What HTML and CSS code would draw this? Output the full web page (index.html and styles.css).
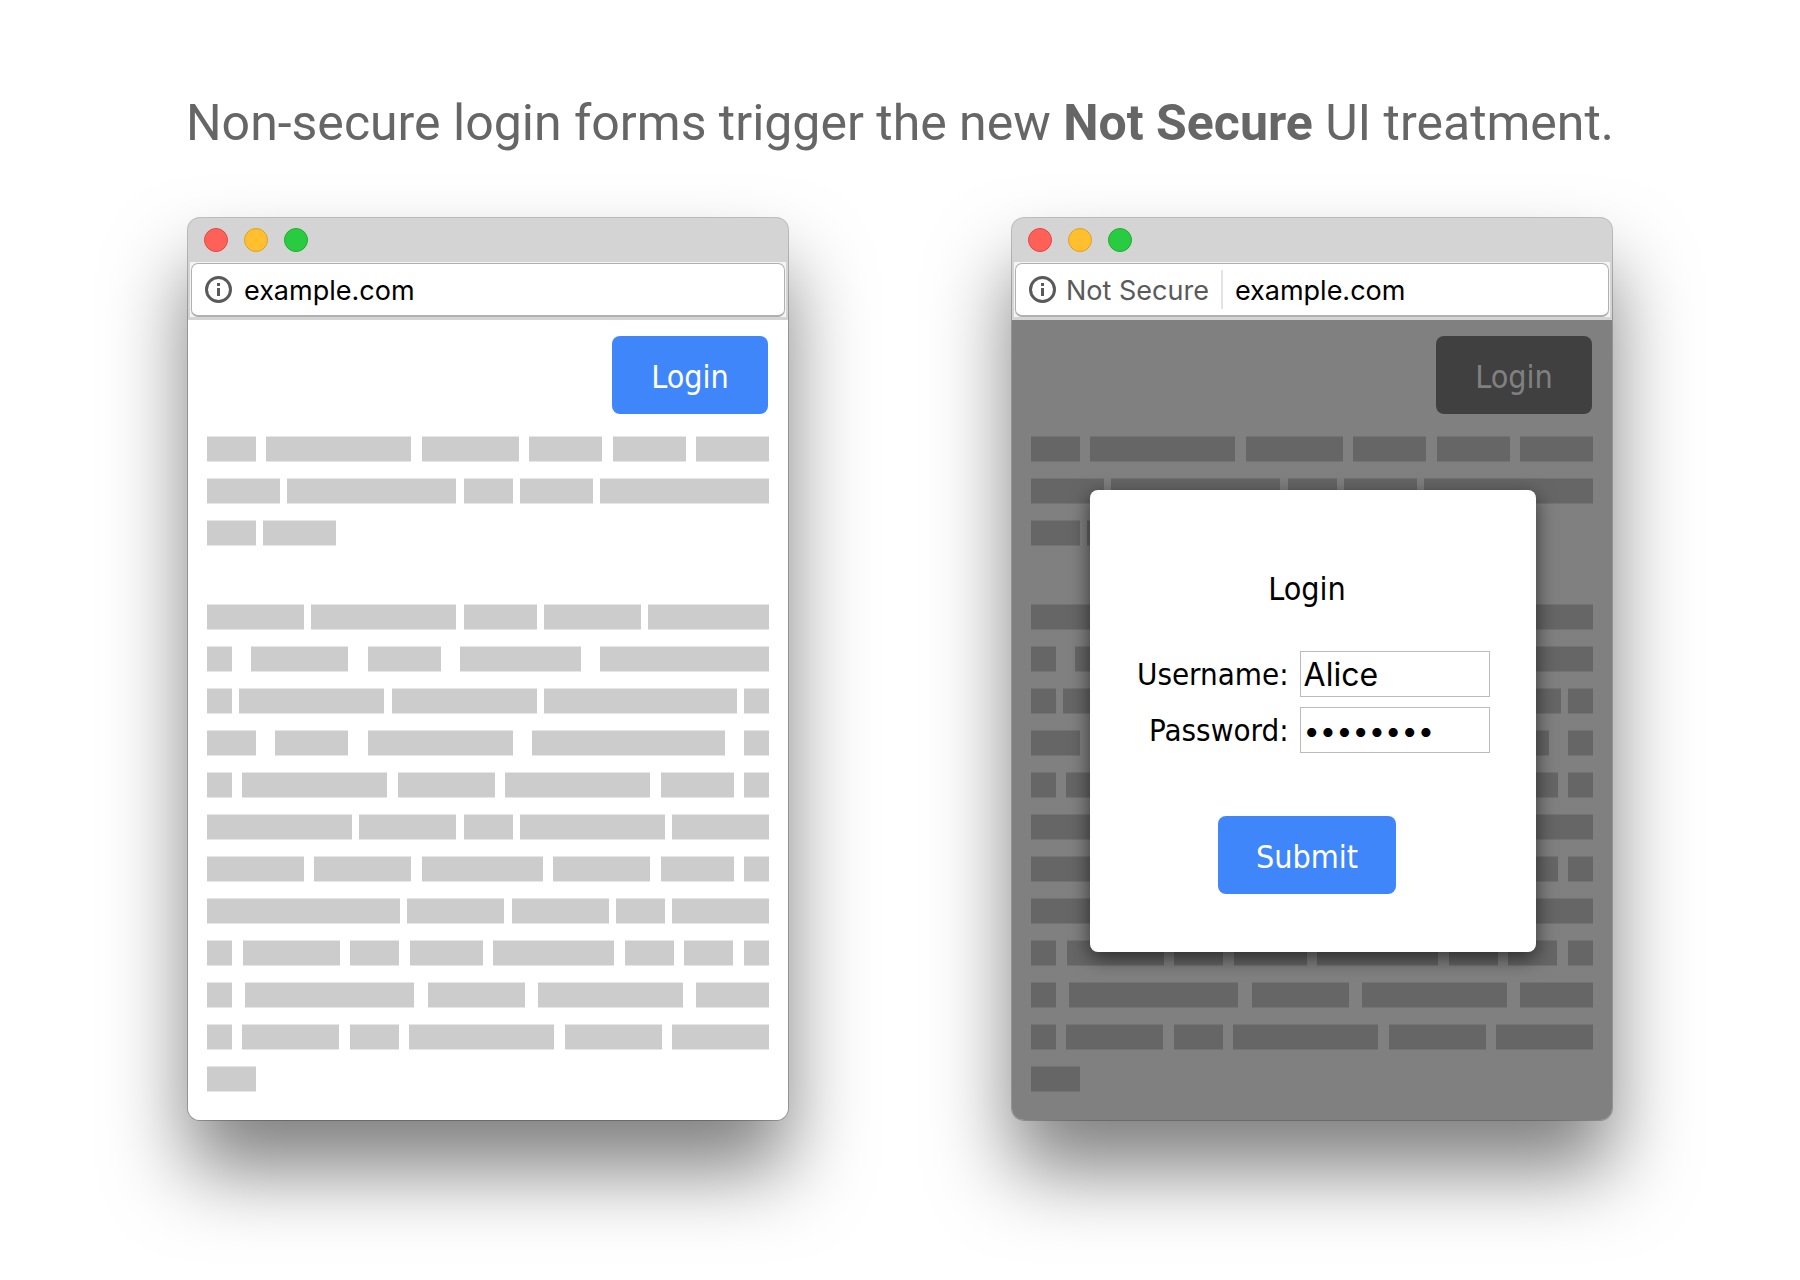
FILE: index.html
```html
<!DOCTYPE html>
<html lang="en">
<head>
<meta charset="utf-8">
<title>Not Secure login forms</title>
<link rel="stylesheet" href="styles.css">
</head>
<body>
<main class="figure">
  <h1 class="headline">Non-secure login forms trigger the new <strong>Not Secure</strong> UI treatment.</h1>
  <div class="windows">
    <section class="window" aria-label="Page before login">
      <div class="titlebar"><span class="dot red"></span><span class="dot yellow"></span><span class="dot green"></span></div>
      <div class="toolbar">
        <div class="omnibox">
          <svg class="info" viewBox="0 0 27 27" aria-hidden="true"><circle cx="13.500" cy="13.500" r="12" fill="none" stroke="currentColor" stroke-width="3"/><path d="M12 7h3v3h-3zM12 12h3v8h-3z" fill="currentColor"/></svg>
          <input class="url" type="text" value="example.com" aria-label="Address">
        </div>
      </div>
      <div class="page">
        <div class="actions"><button class="button login" type="button">Login</button></div>
        <div class="copy">
          <div class="line"><i class="w2"></i><i class="w6"></i><i class="w4"></i><i class="w3"></i><i class="w3"></i><i class="w3"></i></div>
          <div class="line"><i class="w3"></i><i class="w7"></i><i class="w2"></i><i class="w3"></i><i class="w7"></i></div>
          <div class="line last"><i class="w2"></i><i class="w3"></i></div>
          <div class="line"></div>
          <div class="line"><i class="w4"></i><i class="w6"></i><i class="w3"></i><i class="w4"></i><i class="w5"></i></div>
          <div class="line"><i class="w1"></i><i class="w4"></i><i class="w3"></i><i class="w5"></i><i class="w7"></i></div>
          <div class="line"><i class="w1"></i><i class="w6"></i><i class="w6"></i><i class="w8"></i><i class="w1"></i></div>
          <div class="line"><i class="w2"></i><i class="w3"></i><i class="w6"></i><i class="w8"></i><i class="w1"></i></div>
          <div class="line"><i class="w1"></i><i class="w6"></i><i class="w4"></i><i class="w6"></i><i class="w3"></i><i class="w1"></i></div>
          <div class="line"><i class="w6"></i><i class="w4"></i><i class="w2"></i><i class="w6"></i><i class="w4"></i></div>
          <div class="line"><i class="w4"></i><i class="w4"></i><i class="w5"></i><i class="w4"></i><i class="w3"></i><i class="w1"></i></div>
          <div class="line"><i class="w8"></i><i class="w4"></i><i class="w4"></i><i class="w2"></i><i class="w4"></i></div>
          <div class="line"><i class="w1"></i><i class="w4"></i><i class="w2"></i><i class="w3"></i><i class="w5"></i><i class="w2"></i><i class="w2"></i><i class="w1"></i></div>
          <div class="line"><i class="w1"></i><i class="w7"></i><i class="w4"></i><i class="w6"></i><i class="w3"></i></div>
          <div class="line"><i class="w1"></i><i class="w4"></i><i class="w2"></i><i class="w6"></i><i class="w4"></i><i class="w4"></i></div>
          <div class="line last"><i class="w2"></i></div>
        </div>
      </div>
    </section>

    <section class="window" aria-label="Page with login form open">
      <div class="titlebar"><span class="dot red"></span><span class="dot yellow"></span><span class="dot green"></span></div>
      <div class="toolbar">
        <div class="omnibox">
          <svg class="info" viewBox="0 0 27 27" aria-hidden="true"><circle cx="13.500" cy="13.500" r="12" fill="none" stroke="currentColor" stroke-width="3"/><path d="M12 7h3v3h-3zM12 12h3v8h-3z" fill="currentColor"/></svg>
          <span class="verdict">Not Secure</span>
          <input class="url" type="text" value="example.com" aria-label="Address">
        </div>
      </div>
      <div class="page dimmed">
        <div class="actions"><button class="button login" type="button">Login</button></div>
        <div class="copy">
          <div class="line"><i class="w2"></i><i class="w6"></i><i class="w4"></i><i class="w3"></i><i class="w3"></i><i class="w3"></i></div>
          <div class="line"><i class="w3"></i><i class="w7"></i><i class="w2"></i><i class="w3"></i><i class="w7"></i></div>
          <div class="line last"><i class="w2"></i><i class="w3"></i></div>
          <div class="line"></div>
          <div class="line"><i class="w4"></i><i class="w6"></i><i class="w3"></i><i class="w4"></i><i class="w5"></i></div>
          <div class="line"><i class="w1"></i><i class="w4"></i><i class="w3"></i><i class="w5"></i><i class="w7"></i></div>
          <div class="line"><i class="w1"></i><i class="w6"></i><i class="w6"></i><i class="w8"></i><i class="w1"></i></div>
          <div class="line"><i class="w2"></i><i class="w3"></i><i class="w6"></i><i class="w8"></i><i class="w1"></i></div>
          <div class="line"><i class="w1"></i><i class="w6"></i><i class="w4"></i><i class="w6"></i><i class="w3"></i><i class="w1"></i></div>
          <div class="line"><i class="w6"></i><i class="w4"></i><i class="w2"></i><i class="w6"></i><i class="w4"></i></div>
          <div class="line"><i class="w4"></i><i class="w4"></i><i class="w5"></i><i class="w4"></i><i class="w3"></i><i class="w1"></i></div>
          <div class="line"><i class="w8"></i><i class="w4"></i><i class="w4"></i><i class="w2"></i><i class="w4"></i></div>
          <div class="line"><i class="w1"></i><i class="w4"></i><i class="w2"></i><i class="w3"></i><i class="w5"></i><i class="w2"></i><i class="w2"></i><i class="w1"></i></div>
          <div class="line"><i class="w1"></i><i class="w7"></i><i class="w4"></i><i class="w6"></i><i class="w3"></i></div>
          <div class="line"><i class="w1"></i><i class="w4"></i><i class="w2"></i><i class="w6"></i><i class="w4"></i><i class="w4"></i></div>
          <div class="line last"><i class="w2"></i></div>
        </div>
        <form class="dialog">
          <h2 class="dialog-title">Login</h2>
          <div class="fields">
            <label for="username">Username:</label>
            <input class="field" id="username" type="text" value="Alice">
            <label for="password">Password:</label>
            <input class="field secret" id="password" type="password" value="password">
          </div>
          <button class="button submit" type="button">Submit</button>
        </form>
      </div>
    </section>
  </div>
</main>
</body>
</html>
```
FILE: styles.css
```css
* {
  box-sizing: border-box;
}

body {
  margin: 0;
  background: #fff;
  color: #000;
  font-family: "DejaVu Sans Condensed", "DejaVu Sans", sans-serif;
}

.figure {
  max-width: 1424px;
  margin: 0 auto;
  padding: 91px 0 160px;
}

.headline {
  margin: 0 -12px 63px;
  color: #666;
  font: 400 50px/64px Roboto, sans-serif;
  text-align: center;
  white-space: nowrap;
}

.headline strong {
  font-weight: 700;
}

.windows {
  display: flex;
  justify-content: space-between;
  gap: 40px;
}

.window {
  flex: 0 1 600px;
  min-width: 0;
  border-radius: 12px;
  background: #d4d4d4;
  box-shadow: 0 0 0 1px rgba(0, 0, 0, 0.24), 0 50px 80px rgba(0, 0, 0, 0.5);
}

.titlebar {
  display: flex;
  gap: 16px;
  padding: 10px 16px;
}

.dot {
  width: 24px;
  height: 24px;
  border: 1px solid;
  border-radius: 50%;
}

.red {
  background: #ff6159;
  border-color: #e2463f;
}

.yellow {
  background: #ffbf2f;
  border-color: #dfa023;
}

.green {
  background: #29cc41;
  border-color: #1dad2b;
}

.toolbar {
  margin: 0 2px;
  padding: 1px 1px 3px;
  background: linear-gradient(#f4f4f4 55px, #d4d4d4 55px);
}

.omnibox {
  display: flex;
  align-items: center;
  height: 54px;
  padding: 0 13px;
  border: 1px solid #b0b0b0;
  border-bottom-width: 2px;
  border-radius: 7px;
  background: #fff;
}

.info {
  flex: none;
  width: 27px;
  height: 27px;
  color: #5a5a5a;
}

.verdict {
  flex: none;
  margin-left: 10px;
  padding: 3px 12px 0 0;
  border-right: 2px solid #e4e4e4;
  color: #5a5a5a;
  font: 400 27px/36px Inter, sans-serif;
}

.url {
  flex: 1;
  min-width: 0;
  margin-left: 12px;
  padding: 3px 0 0;
  border: 0;
  background: none;
  color: #000;
  font: 400 27px/36px Inter, sans-serif;
}

.page {
  --bar: #ccc;
  --bar-edge: #e6e6e6;
  position: relative;
  padding: 16px 19px 28px;
  border-radius: 0 0 12px 12px;
  background: #fff;
}

.dimmed {
  --bar: #666;
  --bar-edge: #737373;
  background: #808080;
}

.actions {
  display: flex;
  justify-content: flex-end;
  padding-right: 1px;
}

.button {
  height: 78px;
  padding: 3px 0 0;
  border: 0;
  border-radius: 8px;
  background: #4086fb;
  color: #fff;
  font: 400 32px/40px "DejaVu Sans Condensed", "DejaVu Sans", sans-serif;
}

.login {
  width: 156px;
}

.submit {
  width: 178px;
}

.dimmed .login {
  background: #404040;
  color: #808080;
}

.copy {
  display: grid;
  gap: 16px;
  padding: 22px 0 0;
}

.line {
  display: flex;
  justify-content: space-between;
  height: 26px;
}

.line.last {
  justify-content: flex-start;
  gap: 7px;
}

.line i {
  border: solid var(--bar-edge);
  border-width: 1px 0;
  background: var(--bar);
}

.w1 { width: 25px; }
.w2 { width: 49px; }
.w3 { width: 73px; }
.w4 { width: 97px; }
.w5 { width: 121px; }
.w6 { width: 145px; }
.w7 { width: 169px; }
.w8 { width: 193px; }

.dialog {
  position: absolute;
  top: 170px;
  left: 50%;
  display: flex;
  flex-direction: column;
  align-items: center;
  width: 446px;
  margin-left: -222px;
  padding: 79px 47px 58px;
  border-radius: 8px;
  background: #fff;
  box-shadow: 0 6px 20px rgba(0, 0, 0, 0.6);
}

.dialog-title {
  margin: 0 12px 42px 0;
  font-size: 32px;
  font-weight: 400;
  line-height: 40px;
}

.fields {
  display: grid;
  grid-template-columns: 1fr 190px;
  gap: 10px 11px;
  align-items: center;
  align-self: stretch;
  margin-bottom: 63px;
  font-size: 31px;
  line-height: 40px;
  text-align: right;
}

.field {
  width: 100%;
  height: 46px;
  padding: 0 3px;
  border: 1px solid #bbb;
  background: #fff;
  color: #000;
  font: 400 32px/40px Inter, sans-serif;
}

.secret {
  font-size: 29px;
}

.submit {
  margin-right: 12px;
}
```
